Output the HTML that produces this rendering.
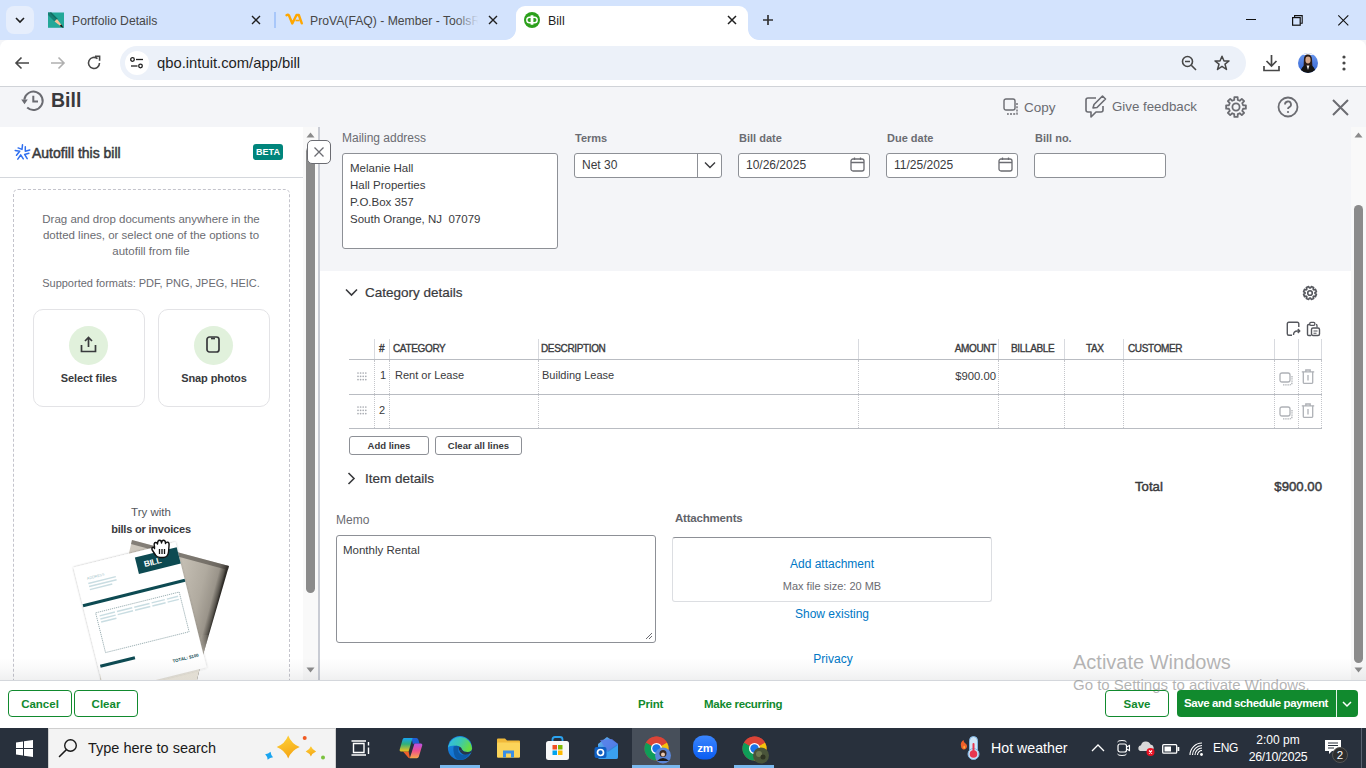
<!DOCTYPE html>
<html><head><meta charset="utf-8">
<style>
*{margin:0;padding:0;box-sizing:border-box}
html,body{width:1366px;height:768px;overflow:hidden;font-family:"Liberation Sans",sans-serif;background:#f4f5f8;position:relative}
.a{position:absolute}
.t{position:absolute;white-space:nowrap;line-height:1}
svg{position:absolute;overflow:visible}
</style></head><body>

<!-- ===== Chrome tab bar ===== -->
<div class="a" id="tabbar" style="left:0;top:0;width:1366px;height:40px;background:#d3e3fd"></div>
<div class="a" style="left:6px;top:6px;width:28px;height:28px;border-radius:8px;background:#e6eefc"></div>
<svg style="left:14px;top:15px" width="12" height="10"><path d="M2 3 L6 7 L10 3" stroke="#1f1f1f" stroke-width="1.6" fill="none"/></svg>

<!-- tab1 -->
<svg style="left:47px;top:12px" width="18" height="17"><rect x="1" y="0.5" width="16" height="15.3" fill="#23a899"/><path d="M1 0.5H3.5L10 7L7.5 9.5L1 3Z" fill="#167f74"/><path d="M3.5 0.5L10.5 7.5" stroke="#0f6a60" stroke-width="1.2"/><path d="M7.5 9.5L10 7L14.5 13L13.5 14Z" fill="#f7c39a"/><path d="M13 13.2L14.5 12.5L16.5 16L13.5 14.5Z" fill="#1a1a1a"/></svg>
<div class="t" style="left:72px;top:15px;font-size:12.2px;color:#474747">Portfolio Details</div>
<svg style="left:251px;top:15px" width="10" height="10"><path d="M1 1L9 9M9 1L1 9" stroke="#1f1f1f" stroke-width="1.4"/></svg>
<div class="a" style="left:274px;top:12px;width:2px;height:16px;background:#a8c7fa"></div>

<!-- tab2 -->
<svg style="left:285px;top:13px" width="18" height="13"><path d="M1.5 2.2Q3 1.2 4 2.5L7.3 10.5L11.5 2H13.8L16.8 10.3" fill="none" stroke="#ffa700" stroke-width="2.4" stroke-linecap="round" stroke-linejoin="round"/><path d="M10.5 7.5H14.5" stroke="#ffa700" stroke-width="1.6"/></svg>
<div class="a" style="left:310px;top:8px;width:170px;height:24px;overflow:hidden"><div class="t" style="left:0;top:7px;font-size:12.2px;color:#474747">ProVA(FAQ) - Member - ToolsRebel</div></div>
<div class="a" style="left:455px;top:8px;width:26px;height:24px;background:linear-gradient(to right,rgba(211,227,253,0),#d3e3fd 90%)"></div>
<svg style="left:488px;top:15px" width="10" height="10"><path d="M1 1L9 9M9 1L1 9" stroke="#1f1f1f" stroke-width="1.4"/></svg>

<!-- active tab -->
<div class="a" style="left:516px;top:6px;width:232px;height:40px;background:#fff;border-radius:9px 9px 0 0"></div>
<div class="a" style="left:505px;top:29px;width:11px;height:11px;background:radial-gradient(circle at 0 0,#d3e3fd 10.5px,#fff 11.3px)"></div>
<div class="a" style="left:748px;top:29px;width:11px;height:11px;background:radial-gradient(circle at 100% 0,#d3e3fd 10.5px,#fff 11.3px)"></div>
<svg style="left:524px;top:12px" width="16" height="16"><circle cx="8" cy="8" r="8" fill="#2ca01c"/><path d="M7.2 5.2H5.6A2.8 2.8 0 0 0 5.6 10.8H6.6M7.3 3.2V12.8" fill="none" stroke="#fff" stroke-width="1.4"/><path d="M8.8 10.8H10.4A2.8 2.8 0 0 0 10.4 5.2H9.4M8.7 3.2V12.8" fill="none" stroke="#fff" stroke-width="1.4"/></svg>
<div class="t" style="left:548px;top:15px;font-size:12.5px;color:#1f1f1f">Bill</div>
<svg style="left:727px;top:15px" width="10" height="10"><path d="M1 1L9 9M9 1L1 9" stroke="#1f1f1f" stroke-width="1.5"/></svg>
<svg style="left:763px;top:15px" width="10" height="10"><path d="M5 0V10M0 5H10" stroke="#333" stroke-width="1.7"/></svg>

<!-- window controls -->
<div class="a" style="left:1246px;top:19px;width:10px;height:1px;background:#111"></div>
<svg style="left:1292px;top:15px" width="11" height="11"><rect x="0.6" y="2.6" width="7.6" height="7.6" fill="none" stroke="#111" stroke-width="1.2"/><path d="M2.6 2.6V0.6H10.2V8.2H8.2" fill="none" stroke="#111" stroke-width="1.1"/></svg>
<svg style="left:1338px;top:15px" width="11" height="11"><path d="M0.3 0.3L10.3 10.3M10.3 0.3L0.3 10.3" stroke="#111" stroke-width="1.1"/></svg>

<!-- ===== toolbar ===== -->
<div class="a" style="left:0;top:40px;width:1366px;height:46px;background:#fff;border-radius:8px 8px 0 0"></div>
<div class="a" style="left:0;top:86px;width:1366px;height:1px;background:#d0d3d8"></div>
<svg style="left:14px;top:56px" width="16" height="14"><path d="M15 7H2M7.5 1.5L2 7L7.5 12.5" stroke="#474747" stroke-width="1.6" fill="none"/></svg>
<svg style="left:50px;top:56px" width="16" height="14"><path d="M1 7H14M8.5 1.5L14 7L8.5 12.5" stroke="#b0b0b0" stroke-width="1.6" fill="none"/></svg>
<svg style="left:86px;top:55px" width="16" height="16"><path d="M13.5 8A5.5 5.5 0 1 1 11.5 3.7" stroke="#474747" stroke-width="1.6" fill="none"/><path d="M9 1.2H13.6V5.8" stroke="#474747" stroke-width="1.6" fill="none"/></svg>
<div class="a" style="left:120px;top:46px;width:1126px;height:34px;border-radius:17px;background:#ecf1f9"></div>
<div class="a" style="left:125px;top:51px;width:24px;height:24px;border-radius:50%;background:#fff"></div>
<svg style="left:130px;top:57px" width="14" height="12"><circle cx="2.5" cy="2.5" r="1.8" fill="none" stroke="#1f1f1f" stroke-width="1.3"/><path d="M6 2.5H13" stroke="#1f1f1f" stroke-width="1.3"/><circle cx="10.5" cy="9" r="1.8" fill="none" stroke="#1f1f1f" stroke-width="1.3"/><path d="M1 9H7.5" stroke="#1f1f1f" stroke-width="1.3"/></svg>
<div class="t" style="left:157px;top:56px;font-size:14.8px;color:#1f1f1f">qbo.intuit.com/app/bill</div>
<svg style="left:1181px;top:55px" width="16" height="16"><circle cx="6.5" cy="6.5" r="5" fill="none" stroke="#474747" stroke-width="1.6"/><path d="M4 6.5H9M10.3 10.3L15 15" stroke="#474747" stroke-width="1.6"/></svg>
<svg style="left:1214px;top:55px" width="16" height="16"><path d="M8 1.2L10 6H15L11 9.2L12.5 14.5L8 11.4L3.5 14.5L5 9.2L1 6H6Z" fill="none" stroke="#474747" stroke-width="1.5" stroke-linejoin="round"/></svg>
<svg style="left:1263px;top:54px" width="17" height="18"><path d="M8.5 1V12M3.5 7L8.5 12L13.5 7M1 12V16.5H16V12" stroke="#474747" stroke-width="1.7" fill="none"/></svg>
<svg style="left:1297px;top:52px" width="22" height="22"><defs><clipPath id="av"><circle cx="11" cy="11" r="10"/></clipPath><linearGradient id="avb" x1="0" y1="0" x2="0" y2="1"><stop offset="0" stop-color="#6f9cf0"/><stop offset="1" stop-color="#2e5fcf"/></linearGradient></defs><g clip-path="url(#av)"><rect width="22" height="22" fill="url(#avb)"/><rect x="0" y="0" width="22" height="3" fill="#f4f6fa"/><path d="M7 6Q8 2 11 2.5Q14.5 2.5 15 7L15.5 16H6.5Z" fill="#2a1a14"/><ellipse cx="11" cy="8" rx="2.6" ry="3.4" fill="#d6a98c"/><path d="M3 22Q4 14 9 13L11 16L13 13Q18 14 19 22Z" fill="#141414"/><path d="M9.6 13.5L11 18L12.4 13.5Z" fill="#f0f0f0"/></g></svg>
<svg style="left:1342px;top:55px" width="4" height="16"><circle cx="2" cy="2" r="1.6" fill="#474747"/><circle cx="2" cy="8" r="1.6" fill="#474747"/><circle cx="2" cy="14" r="1.6" fill="#474747"/></svg>

<!-- ===== QBO header ===== -->
<svg style="left:21px;top:90px" width="24" height="24"><path d="M6.2 17.6A9.2 9.2 0 1 0 3.3 9.6" fill="none" stroke="#6b6c72" stroke-width="2"/><path d="M0.2 9.6H6.8L3.5 14.3Z" fill="#6b6c72"/><path d="M12.3 5.8V11.4H17" fill="none" stroke="#6b6c72" stroke-width="2"/></svg>
<div class="t" style="left:51px;top:91px;font-size:19.5px;font-weight:bold;color:#393a3d">Bill</div>

<svg style="left:1003px;top:98px" width="19" height="19"><rect x="1" y="1" width="11" height="11" rx="2" fill="none" stroke="#6b6c72" stroke-width="1.4"/><path d="M14 5V16H4" fill="none" stroke="#6b6c72" stroke-width="1.4" stroke-dasharray="2 1.2"/></svg>
<div class="t" style="left:1024px;top:101px;font-size:13.5px;color:#6b6c72">Copy</div>
<svg style="left:1084px;top:95px" width="24" height="24"><path d="M12 3H4A2 2 0 0 0 2 5V15A2 2 0 0 0 4 17H7V22L12 17H17A2 2 0 0 0 19 15V11" fill="none" stroke="#6b6c72" stroke-width="1.6" stroke-linejoin="round"/><path d="M9 13L10 9.5L18.5 1L21.5 4L13 12.5Z" fill="none" stroke="#6b6c72" stroke-width="1.6" stroke-linejoin="round"/></svg>
<div class="t" style="left:1112px;top:100px;font-size:13.3px;color:#6b6c72">Give feedback</div>
<svg style="left:1225px;top:96px" width="22" height="22"><path d="M9.24 3.92L9.36 1.14L12.64 1.14L12.76 3.92L14.77 4.75L16.81 2.86L19.14 5.19L17.25 7.23L18.08 9.24L20.86 9.36L20.86 12.64L18.08 12.76L17.25 14.77L19.14 16.81L16.81 19.14L14.77 17.25L12.76 18.08L12.64 20.86L9.36 20.86L9.24 18.08L7.23 17.25L5.19 19.14L2.86 16.81L4.75 14.77L3.92 12.76L1.14 12.64L1.14 9.36L3.92 9.24L4.75 7.23L2.86 5.19L5.19 2.86L7.23 4.75Z" fill="none" stroke="#6b6c72" stroke-width="1.8" stroke-linejoin="round"/><circle cx="11" cy="11" r="3.6" fill="none" stroke="#6b6c72" stroke-width="1.8"/></svg>
<svg style="left:1277px;top:96px" width="22" height="22"><circle cx="11" cy="11" r="9.5" fill="none" stroke="#6b6c72" stroke-width="1.8"/><path d="M8 8.5A3 3 0 1 1 12 11.3C11.3 11.7 11 12.2 11 13" fill="none" stroke="#6b6c72" stroke-width="1.8"/><circle cx="11" cy="16" r="1.1" fill="#6b6c72"/></svg>
<svg style="left:1332px;top:99px" width="17" height="17"><path d="M1 1L16 16M16 1L1 16" stroke="#6b6c72" stroke-width="2"/></svg>


<!-- ===== left autofill panel ===== -->
<div class="a" style="left:0;top:127px;width:305px;height:553px;background:#fff"></div>
<svg style="left:12px;top:142px" width="21" height="20"><path d="M10.5 2.8L10.0 7.4L6.1 5.9M13.3 4.8L13.3 9.2L17.8 8.0M16.9 11.3L12.6 12.4L15.2 16.7M11.3 16.8L8.7 12.8L5.8 17.2M3.2 8.4L7.7 9.3L4.5 13.3" fill="none" stroke="#2f6ff0" stroke-width="1.5" stroke-linecap="round" stroke-linejoin="round"/></svg>
<div class="t" style="left:32px;top:146px;font-size:14px;color:#393a3d;-webkit-text-stroke:0.5px #393a3d;letter-spacing:0px">Autofill this bill</div>
<div class="a" style="left:253px;top:144px;width:30px;height:16px;border-radius:3px;background:#00857c"></div>
<div class="t" style="left:253px;top:148px;width:30px;text-align:center;font-size:9px;font-weight:bold;color:#fff">BETA</div>
<div class="a" style="left:0;top:177px;width:303px;height:1px;background:#d4d7dc"></div>
<div class="a" style="left:13px;top:189px;width:277px;height:520px;border:1px dashed #c4c4cc;border-radius:5px"></div>
<div class="a" style="left:20px;top:211px;width:262px;text-align:center;font-size:11.5px;line-height:16px;color:#6b6c72">Drag and drop documents anywhere in the<br>dotted lines, or select one of the options to<br>autofill from file</div>
<div class="a" style="left:20px;top:275px;width:262px;text-align:center;font-size:11px;line-height:16px;color:#6b6c72">Supported formats: PDF, PNG, JPEG, HEIC.</div>
<div class="a" style="left:33px;top:309px;width:112px;height:98px;border:1px solid #e3e3e6;border-radius:10px;background:#fff"></div>
<div class="a" style="left:158px;top:309px;width:112px;height:98px;border:1px solid #e3e3e6;border-radius:10px;background:#fff"></div>
<div class="a" style="left:69px;top:326px;width:39px;height:39px;border-radius:50%;background:#e1f1dc"></div>
<div class="a" style="left:194px;top:326px;width:39px;height:39px;border-radius:50%;background:#e1f1dc"></div>
<svg style="left:80px;top:336px" width="17" height="17"><path d="M8.5 11V1.5M5 5L8.5 1.5L12 5M1.5 9V15.5H15.5V9" fill="none" stroke="#393a3d" stroke-width="1.7"/></svg>
<svg style="left:206px;top:336px" width="14" height="17"><rect x="1" y="1" width="12" height="15" rx="2.5" fill="none" stroke="#393a3d" stroke-width="1.7"/><path d="M5 2.5H9" stroke="#393a3d" stroke-width="1.7"/></svg>
<div class="t" style="left:34px;top:373px;width:110px;text-align:center;font-size:11px;font-weight:bold;color:#393a3d;letter-spacing:-0.1px">Select files</div>
<div class="t" style="left:159px;top:373px;width:110px;text-align:center;font-size:11px;font-weight:bold;color:#393a3d;letter-spacing:-0.1px">Snap photos</div>
<div class="t" style="left:20px;top:507px;width:262px;text-align:center;font-size:11.5px;color:#55575d">Try with</div>
<div class="t" style="left:20px;top:524px;width:262px;text-align:center;font-size:11px;font-weight:bold;color:#393a3d;letter-spacing:-0.2px">bills or invoices</div>

<!-- bill illustration -->
<svg style="left:60px;top:530px" width="180" height="150">
<defs>
<linearGradient id="bg1" gradientUnits="userSpaceOnUse" x1="70" y1="20" x2="165" y2="45"><stop offset="0" stop-color="#cfc9bf"/><stop offset="0.55" stop-color="#c4beb3"/><stop offset="0.8" stop-color="#b0aa9f"/><stop offset="0.93" stop-color="#9a948a"/><stop offset="0.98" stop-color="#5a564f"/><stop offset="1" stop-color="#2e2b27"/></linearGradient>
<linearGradient id="bg2" gradientUnits="userSpaceOnUse" x1="0" y1="100" x2="0" y2="150"><stop offset="0" stop-color="#9a948a" stop-opacity="0"/><stop offset="0.6" stop-color="#e4dfd2"/><stop offset="1" stop-color="#efeadf"/></linearGradient>
<filter id="sh" x="-10%" y="-10%" width="120%" height="120%"><feGaussianBlur in="SourceAlpha" stdDeviation="0.8"/><feComponentTransfer><feFuncA type="linear" slope="0.35"/></feComponentTransfer><feMerge><feMergeNode/><feMergeNode in="SourceGraphic"/></feMerge></filter>
</defs>
<polygon points="72,10 169,36 143,125 137,150 40,150" fill="url(#bg1)"/>
<polygon points="40,105 149,105 143,125 137,150 40,150" fill="url(#bg2)"/>
<polygon points="72,10 169,36 168,40 71,14" fill="#3a3631" opacity="0.5"/>
<g transform="matrix(1.019,-0.254,0.254,1.019,13.5,37.5)" filter="url(#sh)">
<rect x="0" y="0" width="100" height="123" fill="#fff"/>
</g>
<g transform="matrix(1.019,-0.254,0.254,1.019,13.5,37.5)">
<rect x="59" y="5" width="41" height="16" fill="#0d4a52"/>
<text x="66" y="16" font-size="8" font-weight="bold" fill="#fff" font-family="Liberation Sans" letter-spacing="-0.3">BILL</text>
<text x="10" y="14.5" font-size="3.5" fill="#9fc3c9" font-family="Liberation Sans">ADDRESS</text>
<rect x="10" y="17.5" width="27" height="1.4" fill="#c9dde2"/>
<rect x="10" y="20.5" width="27" height="1.4" fill="#c9dde2"/>
<rect x="10" y="23.5" width="22" height="1.4" fill="#c9dde2"/>
<rect x="0" y="36" width="100" height="3" fill="#0d4a52"/>
<rect x="10" y="47" width="82" height="39" fill="none" stroke="#55767c" stroke-width="0.5" stroke-dasharray="1.2 0.8"/>
<g fill="#c9dde2"><rect x="13" y="50" width="15" height="1.4"/><rect x="13" y="53" width="15" height="1.4"/><rect x="13" y="56" width="15" height="1.4"/>
<rect x="30" y="50" width="15" height="1.4"/><rect x="30" y="53" width="15" height="1.4"/>
<rect x="47" y="50" width="15" height="1.4"/><rect x="47" y="53" width="15" height="1.4"/>
<rect x="64" y="50" width="13" height="1.4"/><rect x="64" y="53" width="13" height="1.4"/>
<rect x="79" y="50" width="11" height="1.4"/><rect x="79" y="53" width="11" height="1.4"/></g>
<rect x="2" y="96" width="34" height="3" fill="#0d4a52"/>
<text x="70" y="111" font-size="4.2" font-weight="bold" fill="#0d4a52" font-family="Liberation Sans">TOTAL: $100</text>
</g>
</svg>
<!-- cursor hand -->
<svg style="left:150px;top:538px" width="24" height="22"><path d="M4.5 8.5Q3.5 5 5.5 4.5Q7 4.2 7.5 6Q7.5 2.5 9.5 2.3Q11.3 2.2 11.5 5Q11.8 2 13.8 2.2Q15.6 2.5 15.5 5.5Q16 3.8 17.8 4.2Q19.5 4.8 19 8L18.5 14Q18 19 13.5 19.5H10Q7 19.5 5.5 17L2.2 12Q1.3 10.2 2.8 9.5Q4 9 4.5 10.5Z" fill="#fff" stroke="#111" stroke-width="1.4" stroke-linejoin="round"/><path d="M9.5 11V16M12 11V16M14.5 11V16" stroke="#111" stroke-width="1.3"/></svg>

<!-- left panel scrollbar -->
<div class="a" style="left:303px;top:127px;width:15px;height:553px;background:#f9f9f9"></div>
<div class="a" style="left:306px;top:147px;width:9px;height:446px;border-radius:5px;background:#8b8b8b"></div>
<svg style="left:306px;top:132px" width="9" height="6"><path d="M0.5 5.5L4.5 0.5L8.5 5.5Z" fill="#8b8b8b"/></svg>
<svg style="left:306px;top:667px" width="9" height="6"><path d="M0.5 0.5L4.5 5.5L8.5 0.5Z" fill="#8b8b8b"/></svg>
<div class="a" style="left:318px;top:127px;width:2px;height:553px;background:#c9ccd4"></div>
<div class="a" style="left:307px;top:140px;width:24px;height:24px;border:1.5px solid #6b6c72;border-radius:5px;background:#fff"></div>
<svg style="left:314px;top:147px" width="10" height="10"><path d="M0.5 0.5L9.5 9.5M9.5 0.5L0.5 9.5" stroke="#6b6c72" stroke-width="1.3"/></svg>


<!-- ===== main form ===== -->
<div class="a" style="left:320px;top:271px;width:1032px;height:409px;background:#fff"></div>
<div class="t" style="left:342px;top:132px;font-size:12px;color:#6b6c72">Mailing address</div>
<div class="a" style="left:342px;top:153px;width:216px;height:96px;border:1px solid #8d9096;border-radius:3px;background:#fff"></div>
<div class="a" style="left:350px;top:160px;font-size:11.5px;line-height:17px;color:#393a3d;white-space:nowrap">Melanie Hall<br>Hall Properties<br>P.O.Box 357<br>South Orange, NJ&nbsp; 07079</div>

<div class="t" style="left:575px;top:133px;font-size:11px;font-weight:bold;color:#6b6c72">Terms</div>
<div class="a" style="left:574px;top:153px;width:148px;height:25px;border:1px solid #8d9096;border-radius:3px;background:#fff"></div>
<div class="a" style="left:697px;top:154px;width:1px;height:23px;background:#8d9096"></div>
<svg style="left:704px;top:161px" width="12" height="8"><path d="M1 1.5L6 6.5L11 1.5" fill="none" stroke="#393a3d" stroke-width="1.4"/></svg>
<div class="t" style="left:582px;top:159px;font-size:12px;color:#393a3d">Net 30</div>

<div class="t" style="left:739px;top:133px;font-size:11px;font-weight:bold;color:#6b6c72">Bill date</div>
<div class="a" style="left:738px;top:153px;width:132px;height:25px;border:1px solid #8d9096;border-radius:3px;background:#fff"></div>
<div class="t" style="left:746px;top:159px;font-size:12px;color:#393a3d">10/26/2025</div>
<svg style="left:850px;top:157px" width="15" height="15"><rect x="1" y="2" width="13" height="12" rx="2" fill="none" stroke="#6b6c72" stroke-width="1.3"/><path d="M1 5.5H14M4.5 0.5V3M10.5 0.5V3" stroke="#6b6c72" stroke-width="1.3"/></svg>

<div class="t" style="left:887px;top:133px;font-size:11px;font-weight:bold;color:#6b6c72">Due date</div>
<div class="a" style="left:886px;top:153px;width:132px;height:25px;border:1px solid #8d9096;border-radius:3px;background:#fff"></div>
<div class="t" style="left:894px;top:159px;font-size:12px;color:#393a3d">11/25/2025</div>
<svg style="left:998px;top:157px" width="15" height="15"><rect x="1" y="2" width="13" height="12" rx="2" fill="none" stroke="#6b6c72" stroke-width="1.3"/><path d="M1 5.5H14M4.5 0.5V3M10.5 0.5V3" stroke="#6b6c72" stroke-width="1.3"/></svg>

<div class="t" style="left:1035px;top:133px;font-size:11px;font-weight:bold;color:#6b6c72">Bill no.</div>
<div class="a" style="left:1034px;top:153px;width:132px;height:25px;border:1px solid #8d9096;border-radius:3px;background:#fff"></div>

<!-- category details -->
<svg style="left:345px;top:288px" width="13" height="9"><path d="M1 1.5L6.5 7L12 1.5" fill="none" stroke="#393a3d" stroke-width="1.6"/></svg>
<div class="t" style="left:365px;top:286px;font-size:13.5px;color:#393a3d;-webkit-text-stroke:0.2px #393a3d">Category details</div>
<svg style="left:1302px;top:285px" width="16" height="16"><path d="M8.59 3.03L9.29 1.53L11.67 2.51L11.10 4.07L11.93 4.90L13.49 4.33L14.47 6.71L12.97 7.41L12.97 8.59L14.47 9.29L13.49 11.67L11.93 11.10L11.10 11.93L11.67 13.49L9.29 14.47L8.59 12.97L7.41 12.97L6.71 14.47L4.33 13.49L4.90 11.93L4.07 11.10L2.51 11.67L1.53 9.29L3.03 8.59L3.03 7.41L1.53 6.71L2.51 4.33L4.07 4.90L4.90 4.07L4.33 2.51L6.71 1.53L7.41 3.03Z" fill="none" stroke="#55575d" stroke-width="1.6" stroke-linejoin="round"/><circle cx="8" cy="8" r="2.3" fill="none" stroke="#55575d" stroke-width="1.6"/></svg>
<svg style="left:1286px;top:321px" width="15" height="16"><path d="M12.8 6V2.8Q12.8 1.3 11.3 1.3H2.8Q1.3 1.3 1.3 2.8V12.8Q1.3 14.3 2.8 14.3H6" fill="none" stroke="#55575d" stroke-width="1.4"/><path d="M7.5 14Q7.5 10 11.5 10H13.5M11.8 8L13.8 10L11.8 12" fill="none" stroke="#55575d" stroke-width="1.4" stroke-linejoin="round"/></svg>
<svg style="left:1306px;top:321px" width="15" height="16"><path d="M4 3.5H2.8Q1.5 3.5 1.5 4.8V13.2Q1.5 14.5 2.8 14.5H5" fill="none" stroke="#55575d" stroke-width="1.4"/><rect x="3.8" y="1.3" width="5" height="3" rx="1" fill="none" stroke="#55575d" stroke-width="1.3"/><path d="M10 3.5Q11 3.5 11 4.5V6.5" fill="none" stroke="#55575d" stroke-width="1.3"/><rect x="5.5" y="7" width="8" height="7.5" rx="1.5" fill="none" stroke="#55575d" stroke-width="1.4"/><path d="M7.5 10H11.5M7.5 12.2H10.5" stroke="#55575d" stroke-width="1.1"/></svg>

<!-- table -->
<div class="a" style="left:349px;top:359px;width:973px;height:1px;background:#b9bcc2"></div>
<div class="a" style="left:349px;top:394px;width:973px;height:1px;background:#b9bcc2"></div>
<div class="a" style="left:349px;top:428px;width:973px;height:1px;background:#b9bcc2"></div>
<!-- header vertical lines -->
<div class="a" style="left:374px;top:339px;width:1px;height:20px;background:#d8dadf"></div>
<div class="a" style="left:389px;top:339px;width:1px;height:20px;background:#d8dadf"></div>
<div class="a" style="left:538px;top:339px;width:1px;height:20px;background:#d8dadf"></div>
<div class="a" style="left:858px;top:339px;width:1px;height:20px;background:#d8dadf"></div>
<div class="a" style="left:998px;top:339px;width:1px;height:20px;background:#d8dadf"></div>
<div class="a" style="left:1064px;top:339px;width:1px;height:20px;background:#d8dadf"></div>
<div class="a" style="left:1123px;top:339px;width:1px;height:20px;background:#d8dadf"></div>
<div class="a" style="left:1274px;top:339px;width:1px;height:20px;background:#d8dadf"></div>
<div class="a" style="left:1298px;top:339px;width:1px;height:20px;background:#d8dadf"></div>
<div class="a" style="left:1321px;top:339px;width:1px;height:20px;background:#d8dadf"></div>
<!-- body dotted vertical lines -->
<div class="a" style="left:374px;top:360px;width:0;height:68px;border-left:1px dotted #c4c6cb"></div>
<div class="a" style="left:389px;top:360px;width:0;height:68px;border-left:1px dotted #c4c6cb"></div>
<div class="a" style="left:538px;top:360px;width:0;height:68px;border-left:1px dotted #c4c6cb"></div>
<div class="a" style="left:858px;top:360px;width:0;height:68px;border-left:1px dotted #c4c6cb"></div>
<div class="a" style="left:998px;top:360px;width:0;height:68px;border-left:1px dotted #c4c6cb"></div>
<div class="a" style="left:1064px;top:360px;width:0;height:68px;border-left:1px dotted #c4c6cb"></div>
<div class="a" style="left:1123px;top:360px;width:0;height:68px;border-left:1px dotted #c4c6cb"></div>
<div class="a" style="left:1274px;top:360px;width:0;height:68px;border-left:1px dotted #c4c6cb"></div>
<div class="a" style="left:1298px;top:360px;width:0;height:68px;border-left:1px dotted #c4c6cb"></div>
<div class="a" style="left:1321px;top:360px;width:0;height:68px;border-left:1px dotted #c4c6cb"></div>

<div class="t" style="left:379px;top:344px;font-size:10px;color:#393a3d;-webkit-text-stroke:0.35px #393a3d;letter-spacing:-0.35px">#</div>
<div class="t" style="left:393px;top:344px;font-size:10px;color:#393a3d;-webkit-text-stroke:0.35px #393a3d;letter-spacing:-0.35px">CATEGORY</div>
<div class="t" style="left:541px;top:344px;font-size:10px;color:#393a3d;-webkit-text-stroke:0.35px #393a3d;letter-spacing:-0.35px">DESCRIPTION</div>
<div class="t" style="left:860px;top:344px;width:136px;text-align:right;font-size:10px;color:#393a3d;-webkit-text-stroke:0.35px #393a3d;letter-spacing:-0.35px">AMOUNT</div>
<div class="t" style="left:1011px;top:344px;font-size:10px;color:#393a3d;-webkit-text-stroke:0.35px #393a3d;letter-spacing:-0.35px">BILLABLE</div>
<div class="t" style="left:1086px;top:344px;font-size:10px;color:#393a3d;-webkit-text-stroke:0.35px #393a3d;letter-spacing:-0.35px">TAX</div>
<div class="t" style="left:1128px;top:344px;font-size:10px;color:#393a3d;-webkit-text-stroke:0.35px #393a3d;letter-spacing:-0.35px">CUSTOMER</div>

<svg style="left:357px;top:372px" width="10" height="9"><g fill="#a9acb2"><circle cx="1.0" cy="1.0" r="0.85"/><circle cx="3.6" cy="1.0" r="0.85"/><circle cx="6.2" cy="1.0" r="0.85"/><circle cx="8.8" cy="1.0" r="0.85"/><circle cx="1.0" cy="4.3" r="0.85"/><circle cx="3.6" cy="4.3" r="0.85"/><circle cx="6.2" cy="4.3" r="0.85"/><circle cx="8.8" cy="4.3" r="0.85"/><circle cx="1.0" cy="7.6" r="0.85"/><circle cx="3.6" cy="7.6" r="0.85"/><circle cx="6.2" cy="7.6" r="0.85"/><circle cx="8.8" cy="7.6" r="0.85"/></g></svg>
<svg style="left:357px;top:406px" width="10" height="9"><g fill="#a9acb2"><circle cx="1.0" cy="1.0" r="0.85"/><circle cx="3.6" cy="1.0" r="0.85"/><circle cx="6.2" cy="1.0" r="0.85"/><circle cx="8.8" cy="1.0" r="0.85"/><circle cx="1.0" cy="4.3" r="0.85"/><circle cx="3.6" cy="4.3" r="0.85"/><circle cx="6.2" cy="4.3" r="0.85"/><circle cx="8.8" cy="4.3" r="0.85"/><circle cx="1.0" cy="7.6" r="0.85"/><circle cx="3.6" cy="7.6" r="0.85"/><circle cx="6.2" cy="7.6" r="0.85"/><circle cx="8.8" cy="7.6" r="0.85"/></g></svg>
<div class="t" style="left:380px;top:370px;font-size:11px;color:#393a3d">1</div>
<div class="t" style="left:379px;top:405px;font-size:11px;color:#393a3d">2</div>
<div class="t" style="left:395px;top:370px;font-size:11px;color:#393a3d">Rent or Lease</div>
<div class="t" style="left:542px;top:370px;font-size:11px;color:#393a3d">Building Lease</div>
<div class="t" style="left:860px;top:371px;width:136px;text-align:right;font-size:11.3px;color:#393a3d">$900.00</div>

<svg style="left:1279px;top:372px" width="15" height="14"><path d="M4 1H9Q11 1 11 3V8Q11 10 9 10H3Q1 10 1 8V3Q1 1 3 1Z" fill="none" stroke="#aeb1b6" stroke-width="1.3"/><path d="M13 4V10.5Q13 12.8 10.7 12.8H4" fill="none" stroke="#aeb1b6" stroke-width="1.3" stroke-dasharray="1.4 0.8"/></svg>
<svg style="left:1301px;top:369px" width="14" height="15"><path d="M0.8 2.8H13.2M4.8 2.8V1H9.2V2.8" fill="none" stroke="#aeb1b6" stroke-width="1.3"/><path d="M2.3 2.8V13.5Q2.3 14.3 3 14.3H11Q11.7 14.3 11.7 13.5V2.8" fill="none" stroke="#aeb1b6" stroke-width="1.3"/><path d="M7 6V11.5" stroke="#aeb1b6" stroke-width="1.3"/></svg>
<svg style="left:1279px;top:406px" width="15" height="14"><path d="M4 1H9Q11 1 11 3V8Q11 10 9 10H3Q1 10 1 8V3Q1 1 3 1Z" fill="none" stroke="#aeb1b6" stroke-width="1.3"/><path d="M13 4V10.5Q13 12.8 10.7 12.8H4" fill="none" stroke="#aeb1b6" stroke-width="1.3" stroke-dasharray="1.4 0.8"/></svg>
<svg style="left:1301px;top:403px" width="14" height="15"><path d="M0.8 2.8H13.2M4.8 2.8V1H9.2V2.8" fill="none" stroke="#aeb1b6" stroke-width="1.3"/><path d="M2.3 2.8V13.5Q2.3 14.3 3 14.3H11Q11.7 14.3 11.7 13.5V2.8" fill="none" stroke="#aeb1b6" stroke-width="1.3"/><path d="M7 6V11.5" stroke="#aeb1b6" stroke-width="1.3"/></svg>

<div class="a" style="left:349px;top:436px;width:80px;height:19px;border:1px solid #8d9096;border-radius:3px;background:#fff;font-size:9.5px;font-weight:bold;color:#393a3d;text-align:center;line-height:17px">Add lines</div>
<div class="a" style="left:435px;top:436px;width:87px;height:19px;border:1px solid #8d9096;border-radius:3px;background:#fff;font-size:9.5px;font-weight:bold;color:#393a3d;text-align:center;line-height:17px">Clear all lines</div>

<svg style="left:347px;top:472px" width="9" height="13"><path d="M1.5 1L7 6.5L1.5 12" fill="none" stroke="#393a3d" stroke-width="1.6"/></svg>
<div class="t" style="left:365px;top:472px;font-size:13.5px;color:#393a3d;-webkit-text-stroke:0.2px #393a3d">Item details</div>

<div class="t" style="left:1135px;top:480px;font-size:13.2px;color:#393a3d;-webkit-text-stroke:0.45px #393a3d">Total</div>
<div class="t" style="left:1222px;top:480px;width:100px;text-align:right;font-size:13.2px;color:#393a3d;-webkit-text-stroke:0.45px #393a3d">$900.00</div>

<!-- memo / attachments -->
<div class="t" style="left:336px;top:514px;font-size:12px;color:#6b6c72">Memo</div>
<div class="a" style="left:336px;top:535px;width:320px;height:108px;border:1px solid #8d9096;border-radius:3px;background:#fff"></div>
<div class="t" style="left:343px;top:545px;font-size:11.5px;color:#393a3d">Monthly Rental</div>
<svg style="left:645px;top:632px" width="8" height="8"><path d="M7 1L1 7M7 4L4 7" stroke="#6b6c72" stroke-width="1"/></svg>

<div class="t" style="left:675px;top:513px;font-size:11.5px;font-weight:bold;color:#62646a;letter-spacing:-0.2px">Attachments</div>
<div class="a" style="left:672px;top:537px;width:320px;height:65px;border:1px solid #dcdee2;border-top:1px solid #8d9096;border-radius:3px;background:#fff"></div>
<div class="t" style="left:672px;top:558px;width:320px;text-align:center;font-size:12px;color:#0077c5">Add attachment</div>
<div class="t" style="left:672px;top:581px;width:320px;text-align:center;font-size:11px;color:#6b6c72">Max file size: 20 MB</div>
<div class="t" style="left:672px;top:608px;width:320px;text-align:center;font-size:12px;color:#0077c5">Show existing</div>
<div class="t" style="left:673px;top:653px;width:320px;text-align:center;font-size:12px;color:#0077c5">Privacy</div>

<!-- main scrollbar -->
<div class="a" style="left:1351px;top:127px;width:15px;height:553px;background:#f9f9f9"></div>
<div class="a" style="left:1354px;top:205px;width:9px;height:458px;border-radius:5px;background:#8b8b8b"></div>
<svg style="left:1354px;top:132px" width="9" height="6"><path d="M0.5 5.5L4.5 0.5L8.5 5.5Z" fill="#8b8b8b"/></svg>
<svg style="left:1354px;top:667px" width="9" height="6"><path d="M0.5 0.5L4.5 5.5L8.5 0.5Z" fill="#8b8b8b"/></svg>

<!-- ===== footer ===== -->
<div class="a" style="left:0;top:658px;width:1366px;height:22px;background:linear-gradient(to bottom,rgba(60,64,72,0),rgba(60,64,72,0.03) 50%,rgba(60,64,72,0.08))"></div>
<div class="a" style="left:0;top:680px;width:1366px;height:48px;background:#fff;border-top:1px solid #d4d7dc"></div>
<div class="a" style="left:8px;top:690px;width:64px;height:27px;border:1px solid #118a2e;border-radius:4px;font-size:11.5px;font-weight:bold;color:#118a2e;text-align:center;line-height:26px">Cancel</div>
<div class="a" style="left:74px;top:690px;width:64px;height:27px;border:1px solid #118a2e;border-radius:4px;font-size:11.5px;font-weight:bold;color:#118a2e;text-align:center;line-height:26px">Clear</div>
<div class="t" style="left:638px;top:699px;font-size:11.5px;font-weight:bold;color:#118a2e;letter-spacing:-0.2px">Print</div>
<div class="t" style="left:704px;top:699px;font-size:11.5px;font-weight:bold;color:#118a2e;letter-spacing:-0.3px">Make recurring</div>
<div class="a" style="left:1105px;top:690px;width:64px;height:27px;border:1px solid #118a2e;border-radius:4px;font-size:11.5px;font-weight:bold;color:#118a2e;text-align:center;line-height:26px;background:#fff">Save</div>
<div class="a" style="left:1177px;top:690px;width:181px;height:27px;border-radius:4px;background:#118a2e"></div>
<div class="a" style="left:1336px;top:690px;width:1px;height:27px;background:#e6f2e8"></div>
<div class="t" style="left:1184px;top:698px;font-size:11.5px;font-weight:bold;color:#fff;letter-spacing:-0.4px">Save and schedule payment</div>
<svg style="left:1342px;top:701px" width="10" height="7"><path d="M1 1L5 5L9 1" fill="none" stroke="#fff" stroke-width="1.5"/></svg>

<!-- activate windows -->
<div class="t" style="left:1073px;top:652px;font-size:20px;color:rgba(130,130,130,.6)">Activate Windows</div>
<div class="t" style="left:1073px;top:677px;font-size:15px;color:rgba(130,130,130,.6)">Go to Settings to activate Windows.</div>

<!-- ===== taskbar ===== -->
<div class="a" style="left:0;top:728px;width:1366px;height:40px;background:#28303c"></div>
<svg style="left:16px;top:740px" width="17" height="17"><path d="M0 2.4L7 1.4V8H0ZM8 1.3L17 0V8H8ZM0 9H7V15.6L0 14.6ZM8 9H17V17L8 15.7Z" fill="#fff"/></svg>
<div class="a" style="left:48px;top:728px;width:288px;height:40px;background:#f3f3f3;border:1px solid #cfcfcf;border-bottom:none"></div>
<svg style="left:58px;top:738px" width="20" height="20"><circle cx="12.5" cy="7.5" r="5.8" fill="none" stroke="#1a1a1a" stroke-width="1.4"/><path d="M8.3 11.7L1.5 18.5" stroke="#1a1a1a" stroke-width="1.6" stroke-linecap="round"/></svg>
<div class="t" style="left:88px;top:741px;font-size:14.5px;color:#1a1a1a">Type here to search</div>
<svg style="left:260px;top:730px" width="70" height="36"><defs><linearGradient id="st" x1="0" y1="0" x2="0.3" y2="1"><stop offset="0" stop-color="#ffd43a"/><stop offset="1" stop-color="#f5a716"/></linearGradient></defs><path d="M28.2 5.600000000000001Q31.4 13.900000000000002 39.7 17.1Q31.4 20.3 28.2 28.6Q25.0 20.3 16.7 17.1Q25.0 13.900000000000002 28.2 5.600000000000001Z" fill="url(#st)"/><path d="M50.9 16.2Q52.4 19.9 56.1 21.4Q52.4 22.9 50.9 26.599999999999998Q49.4 22.9 45.699999999999996 21.4Q49.4 19.9 50.9 16.2Z" fill="url(#st)"/><g transform="rotate(20 9.1 25.7)"><path d="M9.1 21.5Q10.4 24.4 13.3 25.7Q10.4 27.0 9.1 29.9Q7.8 27.0 4.8999999999999995 25.7Q7.8 24.4 9.1 21.5Z" fill="#1aa5f0"/></g><circle cx="44.7" cy="7.9" r="2" fill="#f05a22"/><circle cx="63" cy="27.6" r="2" fill="#7ac13e"/></svg>
<svg style="left:351px;top:739px" width="20" height="18"><path d="M2.5 4.5H13V13.5H2.5ZM0.5 2H15M0.5 16H15M17.5 3V6.5M17.5 8.5V15" fill="none" stroke="#fff" stroke-width="1.4"/></svg>
<!-- copilot -->
<svg style="left:399px;top:737px" width="25" height="23"><defs><linearGradient id="cpa" x1="0" y1="0" x2="0" y2="1"><stop offset="0" stop-color="#18a4f4"/><stop offset="0.45" stop-color="#2fb07a"/><stop offset="1" stop-color="#f4c41a"/></linearGradient><linearGradient id="cpb" x1="0" y1="0" x2="0" y2="1"><stop offset="0" stop-color="#b653e8"/><stop offset="0.5" stop-color="#f0508c"/><stop offset="1" stop-color="#f8a848"/></linearGradient></defs>
<path d="M12.5 1H17.5Q18.8 1 19.3 2.5L20.5 6.5H15.5Q14.5 6.5 14 7.5Z" fill="#1f5ed6"/>
<path d="M4 14.5H9.6L11 21.2Q9.5 21.2 8.8 20Z" fill="#f0602a"/>
<path d="M5 1H13.6L9.6 14.5H2Q0.2 14.5 0.7 12.5L3.6 2.6Q4 1 5 1Z" fill="url(#cpa)"/>
<path d="M15.5 6.5H21.8Q23.8 6.5 23.2 8.5L19.8 19.8Q19.3 21.2 17.8 21.2H10.8Z" fill="url(#cpb)"/>
</svg>
<!-- edge -->
<svg style="left:447px;top:735px" width="26" height="26"><defs><linearGradient id="edt" x1="0" y1="0" x2="1" y2="0.4"><stop offset="0" stop-color="#2fb8f0"/><stop offset="0.55" stop-color="#3cc8b0"/><stop offset="1" stop-color="#66dc44"/></linearGradient><linearGradient id="edb" x1="0" y1="0" x2="0" y2="1"><stop offset="0" stop-color="#1b8ae0"/><stop offset="1" stop-color="#1170d0"/></linearGradient></defs>
<circle cx="13" cy="13" r="12.1" fill="url(#edb)"/>
<path d="M1.2 11.5A12.1 12.1 0 0 1 25.1 13.5Q24.8 16.8 21 17Q16.5 17.2 15 14.5Q14 12 12 11.3Q8 10 3.5 11Q2 11.4 1.2 12.5Z" fill="url(#edt)"/>
<path d="M6.5 11.5Q10 10 12.5 11.8Q10.5 14 11.5 17Q13.5 20.2 18.5 19.8Q21.5 19.5 23.2 17.8Q21 23.5 14 25Q8.5 25 7 19Q6 14.5 6.5 11.5Z" fill="#0d5aa8"/>
<path d="M12.5 11.8Q14.5 12.5 15 14.5Q14.2 16 12.2 15.2Q11.5 13.2 12.5 11.8Z" fill="#28303c"/>
<path d="M15 14.5Q16.5 17.2 21 17Q24.8 16.8 25.1 13.5L24.4 17.5Q21.5 19.5 18.5 19.8Q14.5 19.5 12.2 15.2Q14.2 16 15 14.5Z" fill="#28303c" opacity="0.9"/>
</svg>
<div class="a" style="left:440px;top:765px;width:40px;height:3px;background:#7ab8ee"></div>
<!-- explorer -->
<svg style="left:497px;top:738px" width="23" height="20"><path d="M0 1.5Q0 0.5 1 0.5H8L10 2.5H22Q23 2.5 23 3.5V18.5Q23 19.5 22 19.5H1Q0 19.5 0 18.5Z" fill="#f0b93a"/><rect x="0" y="4.5" width="23" height="15" rx="1" fill="#fbd45a"/><path d="M6 19.5V12.5H17V19.5H14V15.5H9V19.5Z" fill="#3a8ee6"/></svg>
<!-- store -->
<svg style="left:545px;top:736px" width="25" height="25"><path d="M7.5 6V3.5Q7.5 1 10 1H15Q17.5 1 17.5 3.5V6" fill="none" stroke="#2ba3f0" stroke-width="1.8"/><rect x="1" y="5" width="23" height="19" rx="2.5" fill="#f8f8f8"/><rect x="7.5" y="9" width="4.5" height="4.5" fill="#f25022"/><rect x="13" y="9" width="4.5" height="4.5" fill="#7fba00"/><rect x="7.5" y="14.5" width="4.5" height="4.5" fill="#00a4ef"/><rect x="13" y="14.5" width="4.5" height="4.5" fill="#ffb900"/></svg>
<!-- outlook -->
<svg style="left:594px;top:736px" width="25" height="24"><defs><linearGradient id="ol1" x1="0" y1="0" x2="1" y2="1"><stop offset="0" stop-color="#6ab8f5"/><stop offset="1" stop-color="#1b62c8"/></linearGradient></defs>
<path d="M13 1L24 8V21Q24 23 22 23H6Q4 23 4 21V8Z" fill="url(#ol1)"/><path d="M4 9L14 16L24 9V21Q24 23 22 23H6Q4 23 4 21Z" fill="#3aa0f0"/><path d="M6 4L18 3L24 8L13 15Z" fill="#5a7ce8" opacity="0.8"/>
<rect x="0.5" y="11" width="12" height="11" rx="2" fill="#0f5fc2"/><circle cx="6.5" cy="16.5" r="3" fill="none" stroke="#fff" stroke-width="1.7"/></svg>
<!-- chrome active -->
<div class="a" style="left:632px;top:728px;width:48px;height:40px;background:#474f5a"></div>
<div class="a" style="left:632px;top:765px;width:48px;height:3px;background:#7ab8ee"></div>
<svg style="left:644px;top:736px" width="32" height="28"><circle cx="12.5" cy="12.5" r="12" fill="#db4437"/><path d="M12.5 12.5L2.1 6.5A12 12 0 0 0 12.5 24.5Z" fill="#0f9d58"/><path d="M12.5 12.5L22.9 6.5A12 12 0 0 1 12.5 24.5Z" fill="#f4c20d"/><path d="M12.5 12.5L2.1 6.5A12 12 0 0 1 22.9 6.5Z" fill="#db4437"/><circle cx="12.5" cy="12.5" r="5.5" fill="#fff"/><circle cx="12.5" cy="12.5" r="4.2" fill="#1a73e8"/>
<circle cx="19" cy="19.5" r="8" fill="#5a86d8"/><circle cx="19" cy="17.5" r="3.5" fill="#3a2820"/><path d="M13 25Q19 19 25 25" fill="#1a1a1a"/><circle cx="19" cy="18.5" r="2" fill="#e8c8b0"/></svg>
<!-- zoom -->
<svg style="left:693px;top:735px" width="25" height="25"><defs><linearGradient id="zmg" x1="0" y1="0" x2="0" y2="1"><stop offset="0" stop-color="#3a86ff"/><stop offset="1" stop-color="#0b5cf0"/></linearGradient></defs><rect x="0" y="0.5" width="24" height="24" rx="10" fill="url(#zmg)"/><text x="12" y="16.5" font-size="11.5" font-weight="bold" fill="#fff" text-anchor="middle" font-family="Liberation Sans" letter-spacing="-0.3">zm</text></svg>
<!-- chrome 2 -->
<svg style="left:742px;top:736px" width="32" height="28"><circle cx="12.5" cy="12.5" r="12" fill="#db4437"/><path d="M12.5 12.5L2.1 6.5A12 12 0 0 0 12.5 24.5Z" fill="#0f9d58"/><path d="M12.5 12.5L22.9 6.5A12 12 0 0 1 12.5 24.5Z" fill="#f4c20d"/><path d="M12.5 12.5L2.1 6.5A12 12 0 0 1 22.9 6.5Z" fill="#db4437"/><circle cx="12.5" cy="12.5" r="5.5" fill="#fff"/><circle cx="12.5" cy="12.5" r="4.2" fill="#1a73e8"/>
<circle cx="19" cy="19.5" r="8" fill="#4a553a"/><circle cx="17" cy="18" r="3" fill="#6f7a52"/><circle cx="21" cy="21" r="2.5" fill="#2e3322"/></svg>
<div class="a" style="left:734px;top:765px;width:40px;height:3px;background:#7ab8ee"></div>

<!-- tray -->
<svg style="left:958px;top:735px" width="24" height="26"><path d="M3 11Q2 7.5 5.5 5Q5.5 7.5 7.5 8.5Q10 10.5 8.5 13Q7 15 5 14.5Q3 14 3 11Z" fill="#f0602a"/><path d="M5.5 13.5Q4.5 11.5 6.5 10.5Q7.5 12 7 13.5Z" fill="#fbb040"/><rect x="11.5" y="1.5" width="8" height="17" rx="4" fill="#cfe6f8" stroke="#7fb8e8" stroke-width="1"/><circle cx="15.5" cy="19" r="5.5" fill="#cfe6f8" stroke="#7fb8e8" stroke-width="1"/><circle cx="15.5" cy="19" r="3.8" fill="#e8364f"/><rect x="14.5" y="8" width="2" height="10" rx="1" fill="#e8364f"/></svg>
<div class="t" style="left:991px;top:741px;font-size:14.2px;color:#fff">Hot weather</div>
<svg style="left:1091px;top:743px" width="14" height="9"><path d="M1 8L7 2L13 8" fill="none" stroke="#fff" stroke-width="1.3"/></svg>
<svg style="left:1116px;top:739px" width="15" height="18"><rect x="2" y="5" width="8.5" height="8" rx="2" fill="none" stroke="#fff" stroke-width="1.2"/><path d="M10.5 8L13.5 6.5V11.5L10.5 10" fill="none" stroke="#fff" stroke-width="1.1"/><path d="M1.5 3Q2 1.5 6 1.5Q10 1.5 10.5 3M1.5 15Q2 16.5 6 16.5Q10 16.5 10.5 15" fill="none" stroke="#fff" stroke-width="1"/></svg>
<svg style="left:1137px;top:739px" width="20" height="18"><path d="M3 12A3 3 0 0 1 4 6.3A5 5 0 0 1 13.5 5.5A3.5 3.5 0 0 1 15 12Z" fill="#d8d8d8"/><circle cx="13.5" cy="13" r="4" fill="#e81123"/><path d="M12 11.5L15 14.5M15 11.5L12 14.5" stroke="#fff" stroke-width="1.1"/></svg>
<svg style="left:1162px;top:744px" width="18" height="10"><rect x="0.7" y="0.7" width="14" height="8.5" rx="1" fill="none" stroke="#fff" stroke-width="1.3"/><rect x="2.5" y="2.5" width="6.5" height="5" fill="#fff"/><rect x="15.5" y="3" width="1.8" height="4" fill="#fff"/></svg>
<svg style="left:1189px;top:742px" width="15" height="14"><path d="M1 13A12 12 0 0 1 13 1M3.5 13A9.5 9.5 0 0 1 13 3.5M6 13A7 7 0 0 1 13 6M8.5 13A4.5 4.5 0 0 1 13 8.5" fill="none" stroke="#fff" stroke-width="1.1"/><circle cx="12.5" cy="12.5" r="1.4" fill="#fff"/></svg>
<div class="t" style="left:1213px;top:742px;font-size:12px;color:#fff;letter-spacing:-0.3px">ENG</div>
<div class="t" style="left:1238px;top:734px;width:80px;text-align:center;font-size:12px;color:#fff">2:00 pm</div>
<div class="t" style="left:1238px;top:751px;width:80px;text-align:center;font-size:12.3px;color:#fff;letter-spacing:-0.3px">26/10/2025</div>
<svg style="left:1324px;top:739px" width="28" height="26"><path d="M1 1H17V12H8L5 15V12H1Z" fill="#fff"/><path d="M4 4H14M4 6.5H14M4 9H10" stroke="#28303c" stroke-width="1"/><circle cx="16" cy="16" r="7.5" fill="#2e2e2e" stroke="#555" stroke-width="1"/><text x="16" y="20.2" font-size="11.5" fill="#fff" text-anchor="middle" font-family="Liberation Sans">2</text></svg>
<div class="a" style="left:1361px;top:728px;width:1px;height:40px;background:#5a6270"></div>

</body></html>
